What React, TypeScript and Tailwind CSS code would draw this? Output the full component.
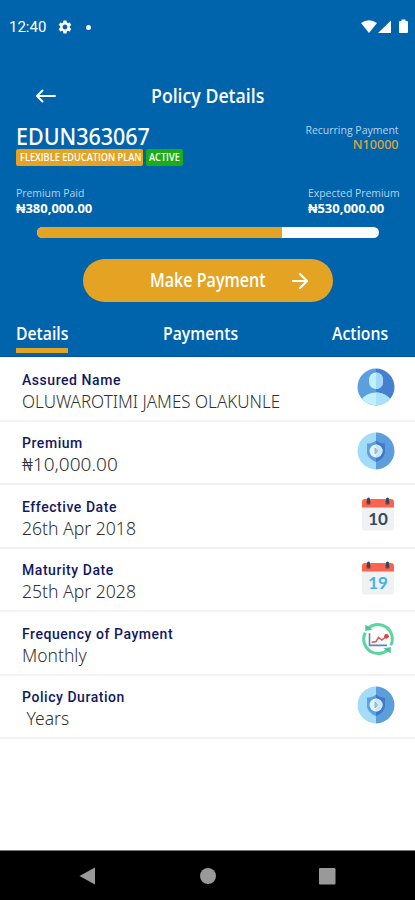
import React from 'react';
import { ArrowRight } from 'lucide-react';
import { MdSettings } from 'react-icons/md';

const UserIcon = () => (
  <svg viewBox="0 0 38 38" className="h-[38px] w-[38px]">
    <defs>
      <clipPath id="user-disc"><circle cx="19" cy="19" r="18.5" /></clipPath>
    </defs>
    <g clipPath="url(#user-disc)">
      <rect width="19" height="38" fill="#5b9fdf" />
      <rect x="19" width="19" height="38" fill="#4480cf" />
      <ellipse cx="19" cy="38.500" rx="16.5" ry="14" fill="#c3effd" />
      <path d="M19 24.500c9 0 16.500 6 16.500 14H19z" fill="#a9e1fa" />
      <rect x="12" y="4.500" width="14" height="16.500" rx="7" fill="#c3effd" />
      <path d="M19 4.500a7 7 0 0 1 7 7V14a7 7 0 0 1-7 7z" fill="#a3dafa" />
    </g>
  </svg>
);

const ShieldIcon = () => (
  <svg viewBox="0 0 38 38" className="h-[38px] w-[38px]">
    <path d="M19 .5a18.500 18.500 0 0 0 0 37z" fill="#a3dcf8" />
    <path d="M19 .5a18.500 18.500 0 0 1 0 37z" fill="#5c9edc" />
    <path d="M19 8.500c-3 2.500-6 3-9 3v8c0 5 4 8.500 9 10.500z" fill="#5d9fdc" />
    <path d="M19 8.500c3 2.500 6 3 9 3v8c0 5-4 8.500-9 10.500z" fill="#4079c9" />
    <circle cx="19" cy="19" r="6.500" fill="#e2f4fb" />
    <path d="M19 12.500a6.500 6.500 0 0 1 0 13z" fill="#cbe7f4" />
    <path d="M18 16l2.500 3-2.500 3z" fill="#b7ced6" stroke="#86aab8" strokeWidth=".8" />
  </svg>
);

const CalendarIcon = ({ day, color }: { day: string; color: string }) => (
  <svg viewBox="0 0 32 34" className="relative left-[2px] h-[34px] w-8">
    <path d="M0 10h32v21.500a2 2 0 0 1-2 2H2a2 2 0 0 1-2-2z" fill="#f0f1f2" />
    <path d="M0 10.500V5a3 3 0 0 1 3-3h26a3 3 0 0 1 3 3v5.500z" fill="#fa6450" />
    <circle cx="6.500" cy="5.500" r="2.600" fill="#c94c40" />
    <circle cx="25.500" cy="5.500" r="2.600" fill="#c94c40" />
    <rect x="5" y=".5" width="3" height="6.500" rx="1.500" fill="#324a5e" />
    <rect x="24" y=".5" width="3" height="6.500" rx="1.500" fill="#324a5e" />
    <text x="16" y="27.500" textAnchor="middle" fontSize="17" fontWeight="700" fontFamily="Lato, sans-serif" fill={color}>{day}</text>
  </svg>
);

const FrequencyIcon = () => (
  <svg viewBox="0 0 32 32" className="relative bottom-[2px] left-[2px] h-[34px] w-[34px]" fill="none">
    <path d="M6.500 6A13.600 13.600 0 0 1 28 22" stroke="#5bd6a0" strokeWidth="2.800" />
    <path d="M25.500 26A13.600 13.600 0 0 1 4 10" stroke="#5bd6a0" strokeWidth="2.800" />
    <path d="M4 8.500V2.500l7 4.500z" fill="#4bc994" />
    <path d="M28 23.500v6l-7-4.500z" fill="#4bc994" />
    <path d="M8 10.500v11.500h16.500" stroke="#5684c9" strokeWidth="1.500" />
    <path d="M10 19l4-.5 2.500-4 3 2.500 4-3" stroke="#e05b56" strokeWidth="1.500" />
    <circle cx="24" cy="13.500" r="2.200" fill="#d94343" />
  </svg>
);

const rows = [
  { label: 'Assured Name', value: 'OLUWAROTIMI JAMES OLAKUNLE', fit: 'scale-x-[0.895]', icon: <UserIcon /> },
  { label: 'Premium', value: '₦10,000.00', fit: '', icon: <ShieldIcon /> },
  { label: 'Effective Date', value: '26th Apr 2018', fit: 'scale-x-[0.925]', icon: <CalendarIcon day="10" color="#324a5e" /> },
  { label: 'Maturity Date', value: '25th Apr 2028', fit: 'scale-x-[0.925]', icon: <CalendarIcon day="19" color="#45b1e8" /> },
  { label: 'Frequency of Payment', value: 'Monthly', fit: 'scale-x-[0.92]', icon: <FrequencyIcon /> },
  { label: 'Policy Duration', value: '\u00a0Years', fit: 'scale-x-[0.92]', icon: <ShieldIcon /> },
];

const StatusBar = () => (
  <div className="flex h-[54px] items-center justify-between pl-[9px] pr-[7px] font-['Roboto',sans-serif]">
    <div className="flex items-center text-white">
      <span className="w-[48px] text-[15px]">12:40</span>
      <MdSettings className="h-4 w-4" />
      <span className="ml-[13px] h-[5px] w-[5px] rounded-full bg-white"></span>
    </div>
    <svg viewBox="0 0 48 16" className="h-4 w-12" fill="#fff">
      <path d="M1 4Q9-1.500 17 4L9 14z" />
      <path d="M31 1.500V14H18z" />
      <path d="M39 3a1 1 0 0 1 1-1h1.500V.5h4V2H47a1 1 0 0 1 1 1v10a1 1 0 0 1-1 1h-7a1 1 0 0 1-1-1z" />
    </svg>
  </div>
);

const App = () => {
  return (
    <div className="flex h-[900px] w-[415px] flex-col overflow-hidden bg-white font-['Open_Sans',sans-serif]">
      <header className="h-[357px] shrink-0 border-b border-[#00549d] bg-[#0064ac] text-white">
        <StatusBar />

        <div className="flex h-[64px] items-center pt-[20px]">
          <div className="w-[151px] pl-[35px]">
            <svg viewBox="0 0 22 14" className="h-[14px] w-[22px]" fill="none" stroke="#fff" strokeWidth="2" strokeLinecap="round" strokeLinejoin="round">
              <path d="M20 7H2M7.500 1.500L2 7l5.500 5.500" />
            </svg>
          </div>
          <h1 className="origin-left scale-x-[0.885] whitespace-nowrap text-[20px] font-semibold leading-6">Policy Details</h1>
        </div>

        <div className="flex h-[67px] justify-between px-4 pt-[5px]">
          <div>
            <div className="w-[149px] origin-left scale-x-[0.895] font-['Noto_Sans',sans-serif] text-[24px] font-medium leading-[26px]">EDUN363067</div>
            <div className="flex gap-[3px] whitespace-nowrap text-[10px] font-semibold leading-[17px]">
              <div className="h-[17px] w-[127px] rounded-[2px] bg-[#e5a324] pl-[4px]">
                <span className="inline-block origin-left scale-x-[0.92]">FLEXIBLE EDUCATION PLAN</span>
              </div>
              <div className="h-[17px] w-[37px] rounded-[2px] bg-[#1aad18] pl-[3px]">
                <span className="inline-block origin-left scale-x-[0.92]">ACTIVE</span>
              </div>
            </div>
          </div>
          <div className="text-right">
            <div className="origin-right scale-x-[0.955] text-[11px] leading-[13px] text-[#b7d3ec]">Recurring Payment</div>
            <div className="origin-right scale-x-[0.97] font-['Noto_Sans',sans-serif] text-[13px] font-medium leading-[16px] text-[#d7a446]">N10000</div>
          </div>
        </div>

        <div className="flex justify-between pl-4">
          <div>
            <div className="origin-left scale-x-[0.945] text-[11px] leading-[16px] text-[#b7d3ec]">Premium Paid</div>
            <div className="text-[13px] font-bold leading-[15px]">₦380,000.00</div>
          </div>
          <div className="w-[107px]">
            <div className="origin-left scale-x-[0.945] text-[11px] leading-[16px] text-[#b7d3ec]">Expected Premium</div>
            <div className="text-[13px] font-bold leading-[15px]">₦530,000.00</div>
          </div>
        </div>

        <div className="ml-[37px] mt-[11px] h-[11px] w-[342px] overflow-hidden rounded-full bg-white">
          <div className="h-full w-[245px] bg-[#e5a324]"></div>
        </div>

        <button className="ml-[83px] mt-[21px] flex h-[43px] w-[250px] items-center rounded-full bg-[#e5a324] pl-[67px]">
          <span className="w-[138px] origin-left scale-x-[0.845] whitespace-nowrap text-left text-[19px] font-semibold">Make Payment</span>
          <ArrowRight className="h-6 w-6" strokeWidth={2.200} />
        </button>

        <nav className="mt-[17px] flex px-4 text-[18.500px] font-semibold leading-7">
          <div className="w-[147px]">
            <div className="h-[34px] w-[52px] border-b-[5px] border-[#e5a324]">
              <span className="inline-block origin-left scale-x-[0.85]">Details</span>
            </div>
          </div>
          <div className="w-[169px]"><span className="inline-block origin-left scale-x-[0.85]">Payments</span></div>
          <div className="w-[66px]"><span className="inline-block origin-left scale-x-[0.85]">Actions</span></div>
        </nav>
      </header>

      <main className="flex-1 pt-px">
        {rows.map((row) => (
          <div key={row.label} className="flex h-[63.500px] items-center justify-between border-b-2 border-[#f3f3f3] pl-[22px]">
            <div className="pt-[6px]">
              <div className="font-['Roboto',sans-serif] text-[14px] font-medium leading-[20px] tracking-[0.55px] text-[#13195f]">{row.label}</div>
              <div className="leading-[23px]">
                <span className={`inline-block origin-left whitespace-nowrap font-['Noto_Sans',sans-serif] text-[19px] font-light text-[#303030] ${row.fit}`}>{row.value}</span>
              </div>
            </div>
            <div className="flex w-[78px] shrink-0 justify-center pb-[3px]">{row.icon}</div>
          </div>
        ))}
      </main>

      <footer className="flex h-[50px] shrink-0 items-center border-t border-[#777] bg-black">
        <svg viewBox="0 0 415 50" className="h-[50px] w-[415px]" fill="#999">
          <path d="M79.500 25L95 16.500v17z" />
          <circle cx="208" cy="25" r="8" />
          <rect x="319" y="17" width="16.500" height="16.500" rx="1" />
        </svg>
      </footer>
    </div>
  );
};

export default App;
